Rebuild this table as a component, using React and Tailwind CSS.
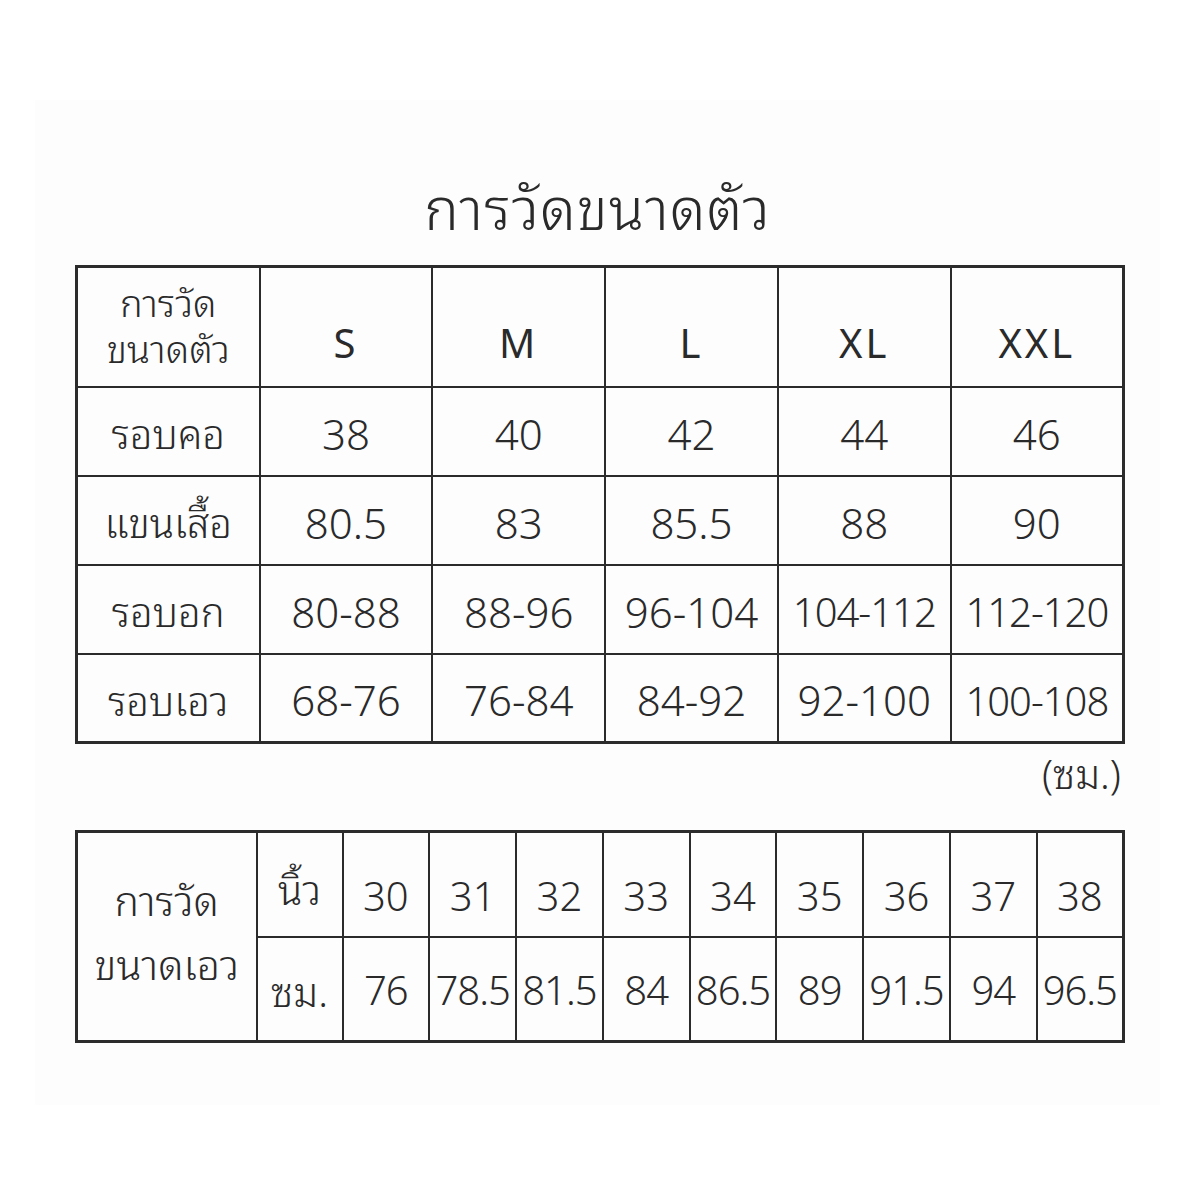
import React from "react";

const font = { fontFamily: '"Noto Sans Thai Looped", "Noto Serif Thai", "Noto Sans", "Noto Sans Thai", sans-serif' };

const sizes = ["S", "M", "L", "XL", "XXL"];
const bodyRows = [
  ["รอบคอ", ["38", "40", "42", "44", "46"]],
  ["แขนเสื้อ", ["80.5", "83", "85.5", "88", "90"]],
  ["รอบอก", ["80-88", "88-96", "96-104", "104-112", "112-120"]],
  ["รอบเอว", ["68-76", "76-84", "84-92", "92-100", "100-108"]],
];

const inch = ["30", "31", "32", "33", "34", "35", "36", "37", "38"];
const cm = ["76", "78.5", "81.5", "84", "86.5", "89", "91.5", "94", "96.5"];

const cell = "border-2 border-[#2b2b2b] p-0 text-center align-middle";

export default function App() {
  return (
    <div className="w-[1200px] h-[1200px] bg-white text-[#2a2a2a] pt-[100px]" style={font}>
      {/* paper */}
      <div className="mx-[35px] w-[1125px] h-[1005px] bg-[#fdfdfe] pt-[64px] px-[40px]">
        <h1 className="text-center text-[58px] font-light leading-[80px] tracking-[1px]">การวัดขนาดตัว</h1>

        {/* body size table */}
        <table className="mt-[21px] w-[1050px] border-collapse border-[3px] border-[#2b2b2b] table-fixed">
          <colgroup>
            <col className="w-[183px]" />
            {sizes.map((s) => (
              <col key={s} />
            ))}
          </colgroup>
          <tbody>
            <tr className="h-[120px]">
              <td className={cell + " pb-[8px]"}>
                <div className="text-[38px] font-light leading-[46px]">
                  การวัด
                  <br />
                  ขนาดตัว
                </div>
              </td>
              {sizes.map((s) => (
                <td key={s} className={cell + " text-[40px] tracking-[3px] pt-[26px]"}>
                  {s}
                </td>
              ))}
            </tr>
            {bodyRows.map(([label, vals]) => (
              <tr key={label} className="h-[89px]">
                <td className={cell + " text-[40px] font-light"}>{label}</td>
                {vals.map((v, i) => (
                  <td
                    key={i}
                    className={cell + (v.includes("1") && v.length > 6 ? " text-[40px] font-light tracking-[-1px]" : " text-[42px] font-light")}
                  >
                    {v}
                  </td>
                ))}
              </tr>
            ))}
          </tbody>
        </table>

        <div className="w-[1050px] text-right text-[40px] font-light leading-[46px] mt-[4px] pr-[4px]">(ซม.)</div>

        {/* waist table */}
        <table className="mt-[36px] w-[1050px] border-collapse border-[3px] border-[#2b2b2b] table-fixed">
          <colgroup>
            <col className="w-[180px]" />
            <col className="w-[86px]" />
            {inch.map((n) => (
              <col key={n} />
            ))}
          </colgroup>
          <tbody>
            <tr className="h-[105px]">
              <td rowSpan={2} className={cell}>
                <div className="text-[41px] font-light leading-[64px] pb-[14px]">
                  การวัด
                  <br />
                  ขนาดเอว
                </div>
              </td>
              <td className={cell + " text-[40px] font-light pt-[6px]"}>นิ้ว</td>
              {inch.map((n) => (
                <td key={n} className={cell + " text-[40px] font-light pt-[18px]"}>
                  {n}
                </td>
              ))}
            </tr>
            <tr className="h-[105px]">
              <td className={cell + " text-[40px] font-light"}>ซม.</td>
              {cm.map((n) => (
                <td key={n} className={cell + " text-[40px] font-light tracking-[-1px] pb-[4px]"}>
                  {n}
                </td>
              ))}
            </tr>
          </tbody>
        </table>
      </div>
    </div>
  );
}
